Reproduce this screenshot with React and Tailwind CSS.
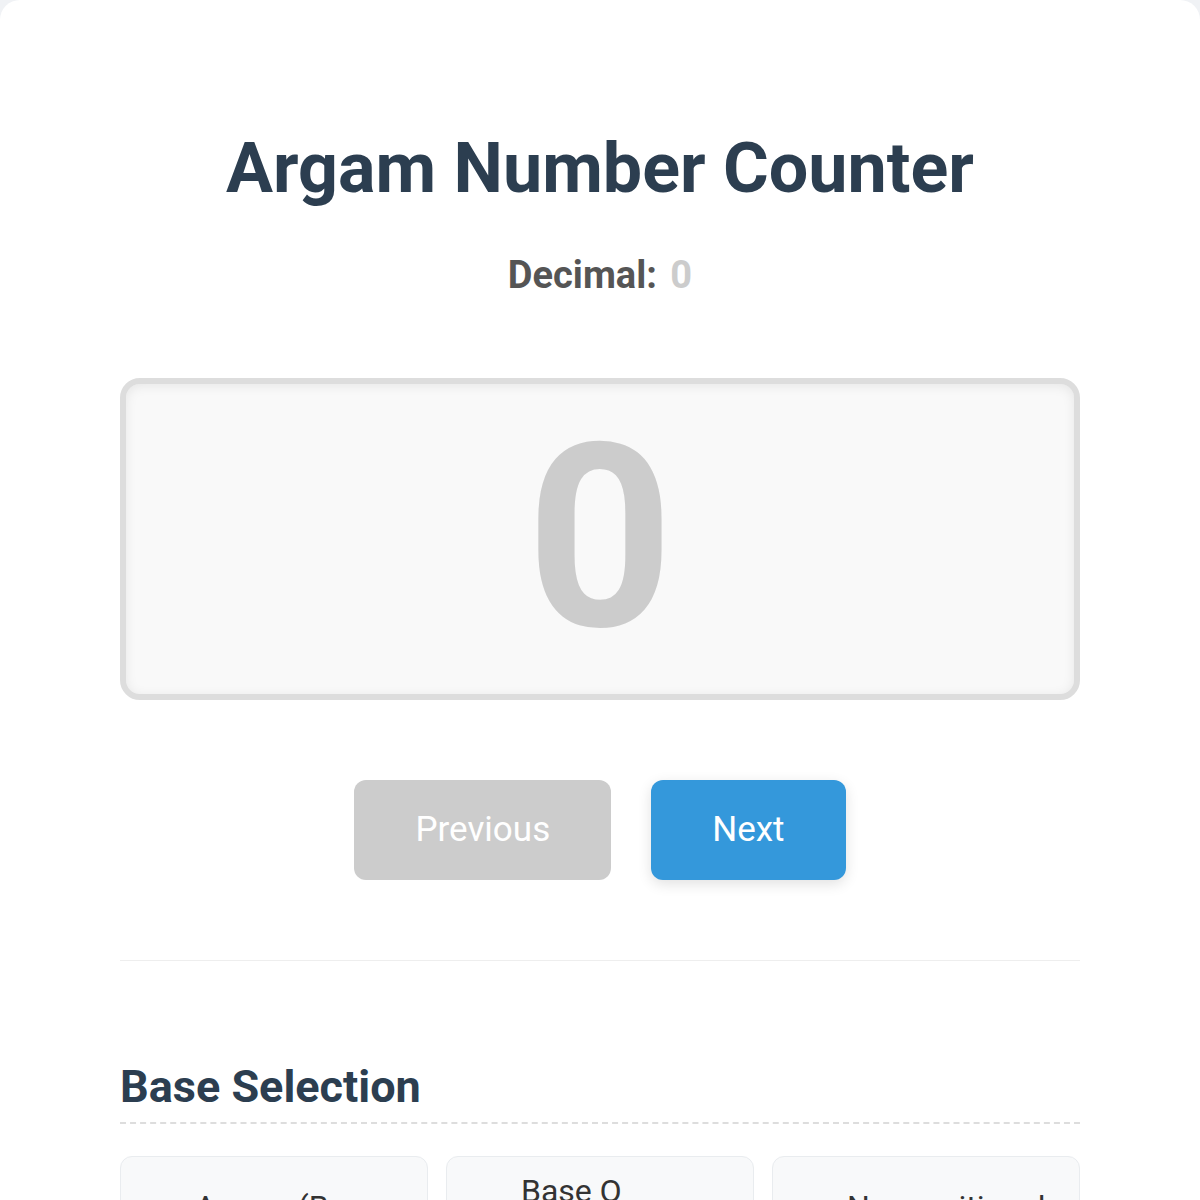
import { useState } from "react";

const bases = [
  { id: "argam", label: "Argam (Base 12)" },
  { id: "q", label: "Base Q (Quater-imaginary)" },
  { id: "np", label: "Nonpositional (Unary)" },
];

const App = () => {
  const [count, setCount] = useState(0);
  const [base, setBase] = useState("argam");

  return (
    <div className="min-h-screen bg-[#f0f2f5]" style={{ fontFamily: "Roboto, 'Noto Sans', sans-serif" }}>
      <div className="mx-auto max-w-[1200px] bg-white rounded-[20px] px-[120px] pt-[133px] pb-20">
        {/* Header */}
        <h1 className="text-center text-[70px] leading-none font-bold text-[#2c3e50]">Argam Number Counter</h1>
        <p className="mt-[48px] text-center text-[38px] leading-[48px] font-bold text-[#555]">
          Decimal: <span className="ml-1 text-[#ccc]">{count}</span>
        </p>

        {/* Display */}
        <div className="mt-[79px] h-[322px] rounded-[20px] border-[6px] border-[#ddd] bg-[#f9f9f9] shadow-[inset_0_2px_12px_rgba(0,0,0,0.08)] flex items-center justify-center">
          <span className="text-[256px] leading-none font-bold text-[#ccc]">{count}</span>
        </div>

        {/* Controls */}
        <div className="mt-20 flex justify-center gap-10">
          <button
            onClick={() => setCount(Math.max(0, count - 1))}
            className="h-[100px] px-[61px] rounded-xl bg-[#ccc] text-white text-[35px] cursor-default"
          >
            Previous
          </button>
          <button
            onClick={() => setCount(count + 1)}
            className="h-[100px] px-[61px] rounded-xl bg-[#3498db] text-white text-[35px] shadow-[0_4px_14px_rgba(0,0,0,0.12)] cursor-pointer"
          >
            Next
          </button>
        </div>

        <hr className="mt-20 border-0 border-t border-[#eee]" />

        {/* Base Selection */}
        <h2 className="mt-[99px] pb-2 text-[45px] leading-[1.2] font-bold text-[#2c3e50] border-b-2 border-dashed border-[#ddd]">Base Selection</h2>
        <div className="mt-8 grid grid-cols-3 gap-[18px]">
          {bases.map((b) => (
            <div
              key={b.id}
              onClick={() => setBase(b.id)}
              className="flex items-center rounded-xl border border-[#e9ecef] bg-[#f8f9fa] pl-[74px] pr-6 py-[18px] text-[32px] leading-none text-[#333] cursor-pointer"
            >
              <span className={base === b.id ? "font-normal" : "font-normal"}>{b.label}</span>
            </div>
          ))}
        </div>
      </div>
    </div>
  );
};

export default App;
